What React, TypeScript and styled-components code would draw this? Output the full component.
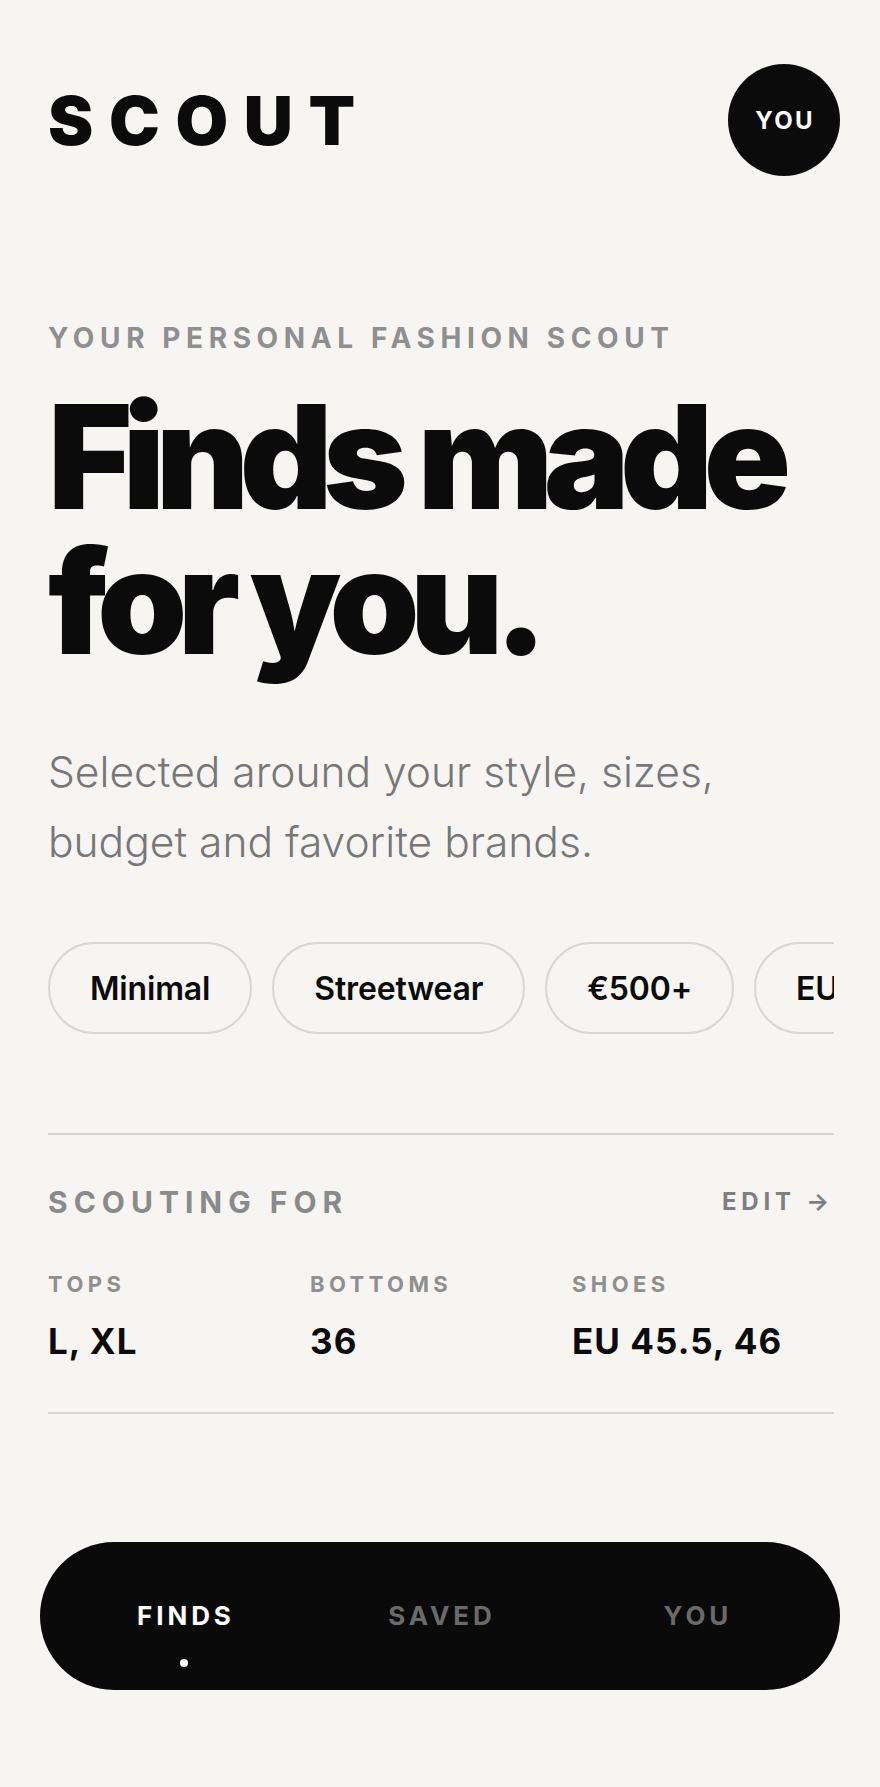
import React from "react";
import styled, { createGlobalStyle } from "styled-components";

const Global = createGlobalStyle`
  html, body { margin: 0; padding: 0; background: #f6f5f1; }
  body { font-family: Inter, "Noto Sans", sans-serif; color: #0b0b0b; -webkit-font-smoothing: antialiased; }
  * { box-sizing: border-box; }
`;

const Page = styled.div`
  min-height: 1787px;
  background: #f6f5f1;
  padding-top: 64px;
  display: flex;
  flex-direction: column;
`;

const Main = styled.main`
  padding: 0 46px 0 48px;
  display: flex;
  flex-direction: column;
`;

const Header = styled.header`
  display: flex;
  align-items: center;
  justify-content: space-between;
  height: 112px;
  margin-right: -6px;
`;

const Logo = styled.div`
  font-size: 68px;
  font-weight: 900;
  letter-spacing: 0.23em;
  line-height: 1;
`;

const Avatar = styled.button`
  width: 112px;
  height: 112px;
  border-radius: 50%;
  border: none;
  background: #0b0b0b;
  color: #fff;
  font-family: inherit;
  font-size: 24px;
  font-weight: 700;
  letter-spacing: 0.1em;
  padding: 0 0 0 0.1em;
  display: flex;
  align-items: center;
  justify-content: center;
`;

const Eyebrow = styled.div`
  margin-top: 148px;
  font-size: 28px;
  line-height: 1;
  font-weight: 700;
  letter-spacing: 0.2em;
  color: #8f8f8f;
`;

const Title = styled.h1`
  margin: 32px 0 0;
  font-size: 144px;
  line-height: 145px;
  font-weight: 900;
  letter-spacing: -0.066em;
  color: #0b0b0b;
`;

const Lead = styled.p`
  margin: 63px 0 0;
  font-size: 42.5px;
  line-height: 70px;
  font-weight: 300;
  color: #777777;
  letter-spacing: 0;
`;

const Chips = styled.div`
  margin-top: 65px;
  display: flex;
  gap: 20px;
  overflow: hidden;
`;

const Chip = styled.span`
  flex: none;
  height: 92px;
  padding: 0 40px;
  border: 2px solid #d9d7d2;
  border-radius: 46px;
  display: flex;
  align-items: center;
  font-size: 32px;
  font-weight: 600;
  color: #0b0b0b;
  letter-spacing: -0.005em;
`;

const Divider = styled.hr<{ $top: number }>`
  margin: ${(p) => p.$top}px 0 0;
  border: none;
  height: 2px;
  background: #d6d4d0;
`;

const SectionHead = styled.div`
  margin-top: 52px;
  display: flex;
  align-items: center;
  justify-content: space-between;
`;

const SectionTitle = styled.div`
  font-size: 30px;
  line-height: 1;
  font-weight: 700;
  letter-spacing: 0.2em;
  color: #8a8a8a;
`;

const EditLink = styled.a`
  font-size: 24px;
  line-height: 1;
  font-weight: 700;
  letter-spacing: 0.2em;
  color: #7f7f7f;
  text-decoration: none;
`;

const Sizes = styled.div`
  margin-top: 56px;
  display: grid;
  grid-template-columns: repeat(3, 1fr);
`;

const SizeCol = styled.div`
  display: flex;
  flex-direction: column;
  gap: 29px;
`;

const SizeLabel = styled.div`
  font-size: 22px;
  line-height: 1;
  font-weight: 700;
  letter-spacing: 0.2em;
  color: #8f8f8f;
`;

const SizeValue = styled.div`
  font-size: 35px;
  line-height: 1;
  font-weight: 700;
  letter-spacing: 0.03em;
  color: #0b0b0b;
`;

const NavWrap = styled.div`
  padding: 0 40px;
  margin-top: 128px;
`;

const Nav = styled.nav`
  height: 148px;
  border-radius: 74px;
  background: #0a0a0a;
  padding: 0 16px;
  display: grid;
  grid-template-columns: repeat(3, 1fr);
  align-items: center;
`;

const NavItem = styled.a<{ $active?: boolean }>`
  position: relative;
  justify-self: center;
  font-size: 26px;
  line-height: 1;
  font-weight: 700;
  letter-spacing: 0.15em;
  padding-left: 0.15em;
  color: ${(p) => (p.$active ? "#ffffff" : "#6a6a6a")};
  text-decoration: none;
`;

const ActiveDot = styled.span`
  position: absolute;
  left: 50%;
  top: 100%;
  margin-top: 30px;
  width: 8px;
  height: 8px;
  border-radius: 50%;
  background: #fff;
  transform: translateX(-50%);
`;

const sizes = [
  { label: "TOPS", value: "L, XL" },
  { label: "BOTTOMS", value: "36" },
  { label: "SHOES", value: "EU 45.5, 46" },
];

export default function App() {
  return (
    <>
      <Global />
      <Page>
        <Main>
          <Header>
            <Logo>SCOUT</Logo>
            <Avatar>YOU</Avatar>
          </Header>
          <Eyebrow>YOUR PERSONAL FASHION SCOUT</Eyebrow>
          <Title>
            Finds made
            <br />
            for you.
          </Title>
          <Lead>
            Selected around your style, sizes,
            <br />
            budget and favorite brands.
          </Lead>
          <Chips>
            <Chip>Minimal</Chip>
            <Chip>Streetwear</Chip>
            <Chip>€500+</Chip>
            <Chip>EU 45.5</Chip>
          </Chips>
          <Divider $top={99} />
          <SectionHead>
            <SectionTitle>SCOUTING FOR</SectionTitle>
            <EditLink href="#">EDIT →</EditLink>
          </SectionHead>
          <Sizes>
            {sizes.map((s) => (
              <SizeCol key={s.label}>
                <SizeLabel>{s.label}</SizeLabel>
                <SizeValue>{s.value}</SizeValue>
              </SizeCol>
            ))}
          </Sizes>
          <Divider $top={53} />
        </Main>
        <NavWrap>
          <Nav>
            <NavItem $active href="#">
              FINDS
              <ActiveDot />
            </NavItem>
            <NavItem href="#">SAVED</NavItem>
            <NavItem href="#">YOU</NavItem>
          </Nav>
        </NavWrap>
      </Page>
    </>
  );
}
